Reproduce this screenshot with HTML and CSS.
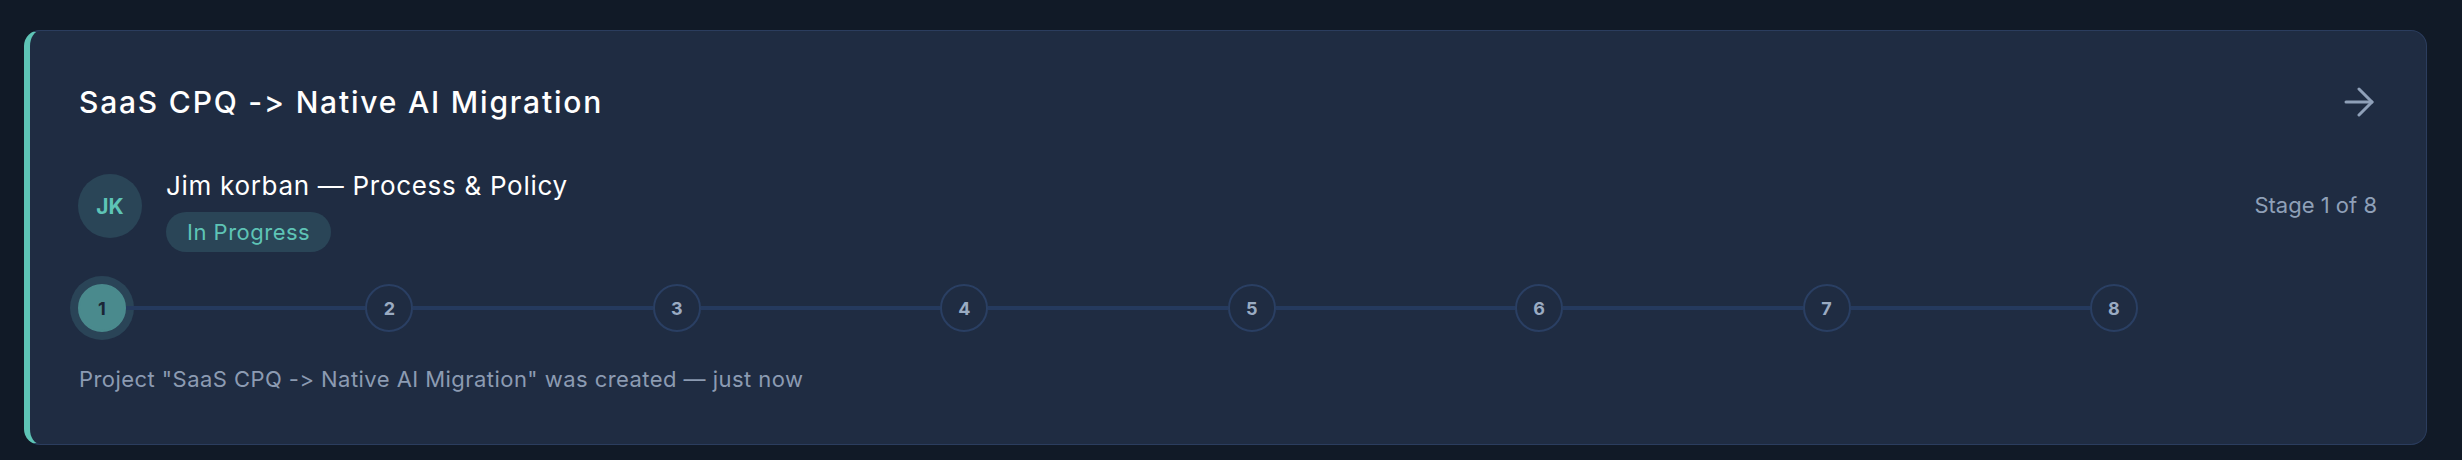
FILE: index.html
```html
<!DOCTYPE html>
<html lang="en">
<head>
<meta charset="utf-8">
<title>Project card</title>
<link rel="stylesheet" href="styles.css">
</head>
<body>
  <div class="card">
    <div class="card-head">
      <h2 class="title">SaaS CPQ -&gt; Native AI Migration</h2>
      <svg class="arrow" width="30" height="30" viewBox="0 0 30 30" fill="none" stroke="currentColor" stroke-width="3" stroke-linecap="round" stroke-linejoin="round"><path d="M2 15H28"/><path d="M15 2L28 15L15 28"/></svg>
    </div>
    <div class="person-row">
      <div class="person">
        <div class="avatar">JK</div>
        <div class="person-text">
          <div class="name">Jim korban — Process &amp; Policy</div>
          <span class="badge">In Progress</span>
        </div>
      </div>
      <div class="stage">Stage 1 of 8</div>
    </div>
    <div class="stepper">
      <div class="step current">1</div>
      <div class="link"></div>
      <div class="step">2</div>
      <div class="link"></div>
      <div class="step">3</div>
      <div class="link"></div>
      <div class="step">4</div>
      <div class="link"></div>
      <div class="step">5</div>
      <div class="link"></div>
      <div class="step">6</div>
      <div class="link"></div>
      <div class="step">7</div>
      <div class="link"></div>
      <div class="step">8</div>
    </div>
    <p class="activity">Project "SaaS CPQ -&gt; Native AI Migration" was created — just now</p>
  </div>
</body>
</html>
```
FILE: styles.css
```css
* { box-sizing: border-box; }
html, body { margin: 0; }
body {
  background: #111a27;
  padding: 30px 35px 0 24px;
  font-family: "Inter", "Noto Sans", sans-serif;
  font-variant-ligatures: none;
  font-feature-settings: "calt" 0, "liga" 0;
  color: #ffffff;
}
.card {
  background: #1f2c42;
  border: 1px solid #2b3d5e;
  border-left: 6px solid #5ec4b6;
  border-radius: 16px;
  padding: 48px 49px 50px 49px;
  height: 415px;
}
.card-head {
  display: flex;
  align-items: center;
  justify-content: space-between;
  height: 46px;
}
.title {
  margin: 0;
  font-size: 30px;
  line-height: 46px;
  font-weight: 500;
  letter-spacing: 1.8px;
  color: #ffffff;
}
.arrow {
  color: #8fa0b8;
  margin-right: 3px;
}
.person-row {
  display: flex;
  justify-content: space-between;
  align-items: flex-start;
  margin-top: 45px;
}
.person {
  display: flex;
  align-items: flex-start;
  gap: 24px;
}
.avatar {
  width: 64px;
  height: 64px;
  margin-top: 4px;
  margin-left: -1px;
  border-radius: 50%;
  background: #2a4557;
  color: #5ec4b6;
  font-weight: 700;
  font-size: 21px;
  display: flex;
  align-items: center;
  justify-content: center;
}
.person-text {
  display: flex;
  flex-direction: column;
  align-items: flex-start;
  gap: 10px;
}
.name {
  font-size: 26px;
  line-height: 32px;
  letter-spacing: 0.7px;
  color: #ffffff;
}
.badge {
  display: inline-flex;
  align-items: center;
  height: 40px;
  padding: 0 21px;
  border-radius: 20px;
  background: #2a4557;
  color: #5ec4b6;
  font-size: 22px;
  letter-spacing: 0.5px;
}
.stage {
  margin-top: 20px;
  font-size: 22px;
  line-height: 30px;
  color: #8fa0b8;
}
.stepper {
  display: flex;
  align-items: center;
  width: 2060px;
  margin-left: -1px;
  margin-top: 24px;
  padding: 8px 0;
}
.step {
  width: 48px;
  height: 48px;
  flex: none;
  border-radius: 50%;
  border: 2px solid #2a3f63;
  color: #9aabc2;
  font-size: 18px;
  font-weight: 700;
  display: flex;
  align-items: center;
  justify-content: center;
}
.step.current {
  background: #4a8a8d;
  border-color: #4a8a8d;
  color: #1b2636;
  box-shadow: 0 0 0 8px #2a4457;
}
.link {
  flex: 1;
  height: 4px;
  background: #253a5e;
}
.activity {
  margin: 24px 0 0 0;
  font-size: 22px;
  line-height: 30px;
  letter-spacing: 0.45px;
  color: #8c9bb2;
}
```
